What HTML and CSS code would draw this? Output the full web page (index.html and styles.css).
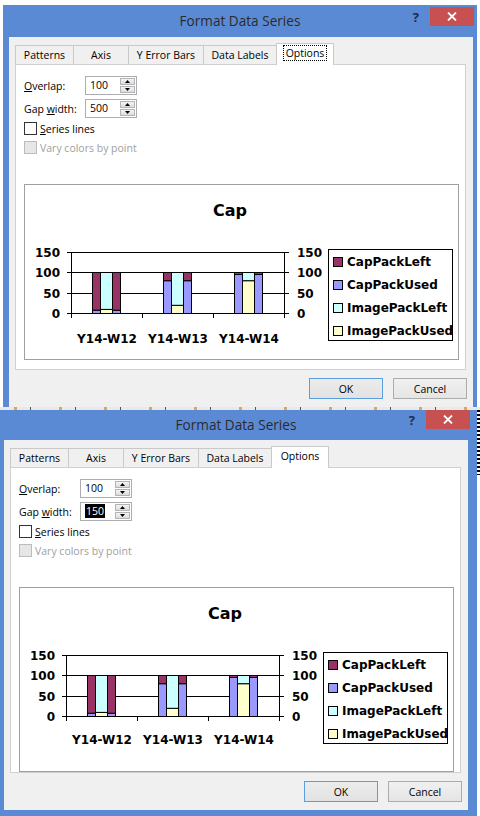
FILE: index.html
```html
<!DOCTYPE html>
<html>
<head>
<meta charset="utf-8">
<title>Format Data Series</title>
<link rel="stylesheet" href="styles.css">
</head>
<body>
<div class="screen">

  <div class="win win1">
    <div class="titlebar">
      <div></div>
      <div class="title">Format Data Series</div>
      <div class="ctrls">
        <span class="help">?</span>
        <span class="close"><svg width="10" height="9" viewBox="0 0 10 9"><path d="M1 0.5L9 8.5M9 0.5L1 8.5" stroke="#fff" stroke-width="1.8"/></svg></span>
      </div>
    </div>
    <div class="client">
      <div class="tabs">
        <div class="tab t1">Patterns</div>
        <div class="tab t2">Axis</div>
        <div class="tab t3">Y Error Bars</div>
        <div class="tab t4">Data Labels</div>
        <div class="tab t5 sel"><span class="focus">Options</span></div>
      </div>
      <div class="panel">
        <div class="row">
          <span class="lbl"><u>O</u>verlap:</span>
          <div class="spin"><span class="val">100</span><span class="arrows"><span class="half"><svg width="5" height="3" viewBox="0 0 5 3"><path d="M0 3L2.5 0L5 3Z" fill="#000"/></svg></span><span class="half"><svg width="5" height="3" viewBox="0 0 5 3"><path d="M0 0L2.5 3L5 0Z" fill="#000"/></svg></span></span></div>
        </div>
        <div class="row">
          <span class="lbl">Gap <u>w</u>idth:</span>
          <div class="spin"><span class="val">500</span><span class="arrows"><span class="half"><svg width="5" height="3" viewBox="0 0 5 3"><path d="M0 3L2.5 0L5 3Z" fill="#000"/></svg></span><span class="half"><svg width="5" height="3" viewBox="0 0 5 3"><path d="M0 0L2.5 3L5 0Z" fill="#000"/></svg></span></span></div>
        </div>
        <div class="check"><span class="box"></span><span><u>S</u>eries lines</span></div>
        <div class="check dis"><span class="box"></span><span>Vary colors by point</span></div>
        <div class="chart">
          <svg class="csvg" width="433" height="174" viewBox="0 0 433 174">
            <text class="ctitle" x="205" y="31">Cap</text>
            <path d="M46 67.5H259M46 87.5H259M46 108.5H259" stroke="#000" stroke-width="1" fill="none"/>
            <g stroke="#000" stroke-width="1">
              <rect x="67.5" y="125.2" width="28" height="3.3" fill="#9999ff"/>
              <rect x="67.5" y="87.5" width="28" height="37.7" fill="#993366"/>
              <rect x="75.5" y="124.4" width="12" height="4.1" fill="#ffffcc"/>
              <rect x="75.5" y="87.5" width="12" height="36.9" fill="#ccffff"/>
              <rect x="138.5" y="95.7" width="28" height="32.8" fill="#9999ff"/>
              <rect x="138.5" y="87.5" width="28" height="8.2" fill="#993366"/>
              <rect x="146.5" y="120.3" width="12" height="8.2" fill="#ffffcc"/>
              <rect x="146.5" y="87.5" width="12" height="32.8" fill="#ccffff"/>
              <rect x="209.5" y="89.5" width="28" height="39" fill="#9999ff"/>
              <rect x="209.5" y="87.5" width="28" height="2" fill="#993366"/>
              <rect x="217.5" y="95.7" width="12" height="32.8" fill="#ffffcc"/>
              <rect x="217.5" y="87.5" width="12" height="8.2" fill="#ccffff"/>
            </g>
            <path d="M46.5 67V129M259.5 67V129M42 67.5H46.5M42 87.5H46.5M42 108.5H46.5M42 128.5H259.5M259.5 67.5H264M259.5 87.5H264M259.5 108.5H264M259.5 128.5H264M46.5 128.5V133M117.5 128.5V133M188.5 128.5V133M259.5 128.5V133" stroke="#000" stroke-width="1" fill="none"/>
            <g class="ax">
              <text x="35" y="71.9" text-anchor="end">150</text>
              <text x="35" y="91.9" text-anchor="end">100</text>
              <text x="35" y="112.9" text-anchor="end">50</text>
              <text x="35" y="132.9" text-anchor="end">0</text>
              <text x="272" y="71.9">150</text>
              <text x="272" y="91.9">100</text>
              <text x="272" y="112.9">50</text>
              <text x="272" y="132.9">0</text>
              <text x="82" y="158" text-anchor="middle">Y14-W12</text>
              <text x="153" y="158" text-anchor="middle">Y14-W13</text>
              <text x="224" y="158" text-anchor="middle">Y14-W14</text>
            </g>
            <rect x="303.5" y="64.5" width="124" height="91" fill="#fff" stroke="#000" stroke-width="1"/>
            <g stroke="#000" stroke-width="1">
              <rect x="308.5" y="72.5" width="9" height="9" fill="#993366"/>
              <rect x="308.5" y="95.5" width="9" height="9" fill="#9999ff"/>
              <rect x="308.5" y="118.5" width="9" height="9" fill="#ccffff"/>
              <rect x="308.5" y="141.5" width="9" height="9" fill="#ffffcc"/>
            </g>
            <g class="ax">
              <text x="322" y="81.2">CapPackLeft</text>
              <text x="322" y="104.2">CapPackUsed</text>
              <text x="322" y="127.2">ImagePackLeft</text>
              <text x="322" y="150.2" textLength="106" lengthAdjust="spacingAndGlyphs">ImagePackUsed</text>
            </g>
          </svg>
        </div>
      </div>
      <div class="btns">
        <button class="btn def">OK</button>
        <button class="btn">Cancel</button>
      </div>
    </div>
  </div>

  <div class="strip"></div>

  <div class="row2">
  <div class="win win2">
    <div class="titlebar">
      <div></div>
      <div class="title">Format Data Series</div>
      <div class="ctrls">
        <span class="help">?</span>
        <span class="close"><svg width="10" height="9" viewBox="0 0 10 9"><path d="M1 0.5L9 8.5M9 0.5L1 8.5" stroke="#fff" stroke-width="1.8"/></svg></span>
      </div>
    </div>
    <div class="client">
      <div class="tabs">
        <div class="tab t1">Patterns</div>
        <div class="tab t2">Axis</div>
        <div class="tab t3">Y Error Bars</div>
        <div class="tab t4">Data Labels</div>
        <div class="tab t5 sel"><span class="nofocus">Options</span></div>
      </div>
      <div class="panel">
        <div class="row">
          <span class="lbl"><u>O</u>verlap:</span>
          <div class="spin"><span class="val">100</span><span class="arrows"><span class="half"><svg width="5" height="3" viewBox="0 0 5 3"><path d="M0 3L2.5 0L5 3Z" fill="#000"/></svg></span><span class="half"><svg width="5" height="3" viewBox="0 0 5 3"><path d="M0 0L2.5 3L5 0Z" fill="#000"/></svg></span></span></div>
        </div>
        <div class="row">
          <span class="lbl">Gap <u>w</u>idth:</span>
          <div class="spin"><span class="val"><span class="selected">150</span></span><span class="arrows"><span class="half"><svg width="5" height="3" viewBox="0 0 5 3"><path d="M0 3L2.5 0L5 3Z" fill="#000"/></svg></span><span class="half"><svg width="5" height="3" viewBox="0 0 5 3"><path d="M0 0L2.5 3L5 0Z" fill="#000"/></svg></span></span></div>
        </div>
        <div class="check"><span class="box"></span><span><u>S</u>eries lines</span></div>
        <div class="check dis"><span class="box"></span><span>Vary colors by point</span></div>
        <div class="chart tall">
          <svg class="csvg" width="433" height="174" viewBox="0 0 433 174">
            <text class="ctitle" x="205" y="31">Cap</text>
            <path d="M46 67.5H259M46 87.5H259M46 108.5H259" stroke="#000" stroke-width="1" fill="none"/>
            <g stroke="#000" stroke-width="1">
              <rect x="67.5" y="125.2" width="28" height="3.3" fill="#9999ff"/>
              <rect x="67.5" y="87.5" width="28" height="37.7" fill="#993366"/>
              <rect x="75.5" y="124.4" width="12" height="4.1" fill="#ffffcc"/>
              <rect x="75.5" y="87.5" width="12" height="36.9" fill="#ccffff"/>
              <rect x="138.5" y="95.7" width="28" height="32.8" fill="#9999ff"/>
              <rect x="138.5" y="87.5" width="28" height="8.2" fill="#993366"/>
              <rect x="146.5" y="120.3" width="12" height="8.2" fill="#ffffcc"/>
              <rect x="146.5" y="87.5" width="12" height="32.8" fill="#ccffff"/>
              <rect x="209.5" y="89.5" width="28" height="39" fill="#9999ff"/>
              <rect x="209.5" y="87.5" width="28" height="2" fill="#993366"/>
              <rect x="217.5" y="95.7" width="12" height="32.8" fill="#ffffcc"/>
              <rect x="217.5" y="87.5" width="12" height="8.2" fill="#ccffff"/>
            </g>
            <path d="M46.5 67V129M259.5 67V129M42 67.5H46.5M42 87.5H46.5M42 108.5H46.5M42 128.5H259.5M259.5 67.5H264M259.5 87.5H264M259.5 108.5H264M259.5 128.5H264M46.5 128.5V133M117.5 128.5V133M188.5 128.5V133M259.5 128.5V133" stroke="#000" stroke-width="1" fill="none"/>
            <g class="ax">
              <text x="35" y="71.9" text-anchor="end">150</text>
              <text x="35" y="91.9" text-anchor="end">100</text>
              <text x="35" y="112.9" text-anchor="end">50</text>
              <text x="35" y="132.9" text-anchor="end">0</text>
              <text x="272" y="71.9">150</text>
              <text x="272" y="91.9">100</text>
              <text x="272" y="112.9">50</text>
              <text x="272" y="132.9">0</text>
              <text x="82" y="156" text-anchor="middle">Y14-W12</text>
              <text x="153" y="156" text-anchor="middle">Y14-W13</text>
              <text x="224" y="156" text-anchor="middle">Y14-W14</text>
            </g>
            <rect x="303.5" y="64.5" width="124" height="91" fill="#fff" stroke="#000" stroke-width="1"/>
            <g stroke="#000" stroke-width="1">
              <rect x="308.5" y="72.5" width="9" height="9" fill="#993366"/>
              <rect x="308.5" y="95.5" width="9" height="9" fill="#9999ff"/>
              <rect x="308.5" y="118.5" width="9" height="9" fill="#ccffff"/>
              <rect x="308.5" y="141.5" width="9" height="9" fill="#ffffcc"/>
            </g>
            <g class="ax">
              <text x="322" y="81.2">CapPackLeft</text>
              <text x="322" y="104.2">CapPackUsed</text>
              <text x="322" y="127.2">ImagePackLeft</text>
              <text x="322" y="150.2" textLength="106" lengthAdjust="spacingAndGlyphs">ImagePackUsed</text>
            </g>
          </svg>
        </div>
      </div>
      <div class="btns">
        <button class="btn def">OK</button>
        <button class="btn">Cancel</button>
      </div>
    </div>
  </div>
  <div class="edge"></div>
  </div>

</div>
</body>
</html>
```

FILE: styles.css
```css
html, body {
  margin: 0;
  padding: 0;
  background: #ffffff;
}

body {
  font-family: "Open Sans", "Noto Sans", sans-serif;
  font-size: 10.5px;
  color: #000;
}

.screen {
  width: 480px;
  height: 816px;
  overflow: hidden;
}

/* ---------- window frame ---------- */
.win {
  background: #5b8ad4;
  box-sizing: border-box;
  display: flex;
  flex-direction: column;
  overflow: hidden;
}

.win1 {
  margin: 5px 0 0 3px;
  width: 474px;
  height: 402px;
  padding: 0 4px 0 6px;
}

.row2 {
  display: flex;
  align-items: flex-start;
}

.win2 {
  flex: none;
  width: 477px;
  height: 406px;
  padding: 0 9px 6px 4px;
}

.edge {
  width: 3px;
  height: 65px;
  background: repeating-linear-gradient(180deg, #000 0 2px, #fff 2px 4px);
}

.titlebar {
  height: 32px;
  flex: none;
  display: grid;
  grid-template-columns: 1fr auto 1fr;
  align-items: start;
}

.win1 .titlebar {
  margin: 0 -4px 0 -6px;
}

.win2 .titlebar {
  height: 30px;
  margin: 0 -9px 0 -4px;
  padding-right: 5px;
}

.title {
  font-size: 13.6px;
  line-height: 32px;
  color: #2b2b2b;
  white-space: nowrap;
}

.win2 .title {
  line-height: 30px;
}

.ctrls {
  justify-self: end;
  display: flex;
  align-items: flex-start;
  padding-top: 2px;
  margin-right: 3px;
}

.win2 .ctrls {
  margin-right: 2px;
  padding-top: 0;
}

.help {
  font-weight: bold;
  font-size: 13px;
  line-height: 15px;
  color: #1d2c4c;
  margin: 3px 11px 0 0;
}

.close {
  width: 44px;
  height: 19px;
  background: #c75050;
  display: flex;
  align-items: center;
  justify-content: center;
}

.close svg {
  display: block;
}

/* ---------- client area ---------- */
.client {
  flex: 1;
  background: #f0f0f0;
  padding-top: 6px;
  min-height: 0;
}

.tabs {
  display: flex;
  align-items: flex-end;
  height: 21px;
  margin-left: 6px;
  position: relative;
  z-index: 1;
}

.tab {
  box-sizing: border-box;
  height: 19px;
  border: 1px solid #c9c9c9;
  border-bottom: none;
  background: #f0f0f0;
  margin-left: -1px;
  text-align: center;
  line-height: 18px;
  white-space: nowrap;
}

.tab.t1 { width: 59px; margin-left: 0; }
.tab.t2 { width: 56px; }
.tab.t3 { width: 76px; }
.tab.t4 { width: 74px; }
.tab.t5 { width: 58px; }

.tab.sel {
  height: 22px;
  margin-bottom: -1px;
  background: #ffffff;
  line-height: 19px;
}

.focus {
  outline: 1px dotted #000;
  outline-offset: 0;
  padding: 0 2px;
}

.panel {
  margin-left: 6px;
  width: 451px;
  height: 306px;
  box-sizing: border-box;
  border: 1px solid #d0d0d0;
  background: #ffffff;
  padding: 11px 0 0 8px;
}

.row {
  display: flex;
  align-items: center;
  height: 19px;
  margin-bottom: 4px;
}

.lbl {
  width: 61px;
  flex: none;
}

.spin {
  box-sizing: border-box;
  width: 52px;
  height: 19px;
  border: 1px solid #abadb3;
  background: #fff;
  display: flex;
}

.val {
  flex: 1;
  padding-left: 4px;
  line-height: 17px;
}

.selected {
  background: #000;
  color: #fff;
  padding: 0 1px;
}

.arrows {
  width: 16px;
  display: flex;
  flex-direction: column;
  padding: 1px 1px 1px 0;
  gap: 1px;
  box-sizing: border-box;
}

.half {
  flex: 1;
  background: linear-gradient(#f4f4f4, #dcdcdc);
  border: 1px solid #b4b4b4;
  display: flex;
  align-items: center;
  justify-content: center;
}

.half svg {
  display: block;
}

.check {
  display: flex;
  align-items: center;
  height: 13px;
  margin-top: 1px;
  gap: 3px;
}

.check + .check {
  margin-top: 6px;
}

.box {
  box-sizing: border-box;
  width: 13px;
  height: 13px;
  border: 1px solid #333;
  background: #fff;
  flex: none;
}

.check.dis {
  color: #a0a0a0;
}

.check.dis .box {
  border-color: #bcbcbc;
  background: #e6e6e6;
}

.chart {
  margin-top: 30px;
  width: 435px;
  height: 176px;
  box-sizing: border-box;
  border: 1px solid #a0a0a0;
  background: #ffffff;
}

.chart.tall {
  height: 185px;
}

.csvg {
  display: block;
  font-family: "DejaVu Sans", sans-serif;
  font-weight: bold;
}

.ctitle {
  font-size: 16px;
  text-anchor: middle;
}

.ax text {
  font-size: 12px;
}

/* ---------- buttons ---------- */
.btns {
  display: flex;
  justify-content: flex-end;
  gap: 10px;
  margin: 8px 6px 0 0;
}

.btn {
  box-sizing: border-box;
  width: 74px;
  height: 21px;
  border: 1px solid #acacac;
  background: linear-gradient(#f0f0f0, #e5e5e5);
  font-family: "Open Sans", "Noto Sans", sans-serif;
  font-size: 10.5px;
  color: #000;
  padding: 0;
}

.btn.def {
  border-color: #5a9ee0;
  background: linear-gradient(#ececec, #e2e2e2);
}

/* ---------- strip between the two screenshots ---------- */
.strip {
  height: 3px;
  background: repeating-linear-gradient(90deg, #e9e9e9 0 14px, #d8a860 14px 17px, #e9e9e9 17px 30px, #555 30px 31px, #e9e9e9 31px 45px);
}
```
